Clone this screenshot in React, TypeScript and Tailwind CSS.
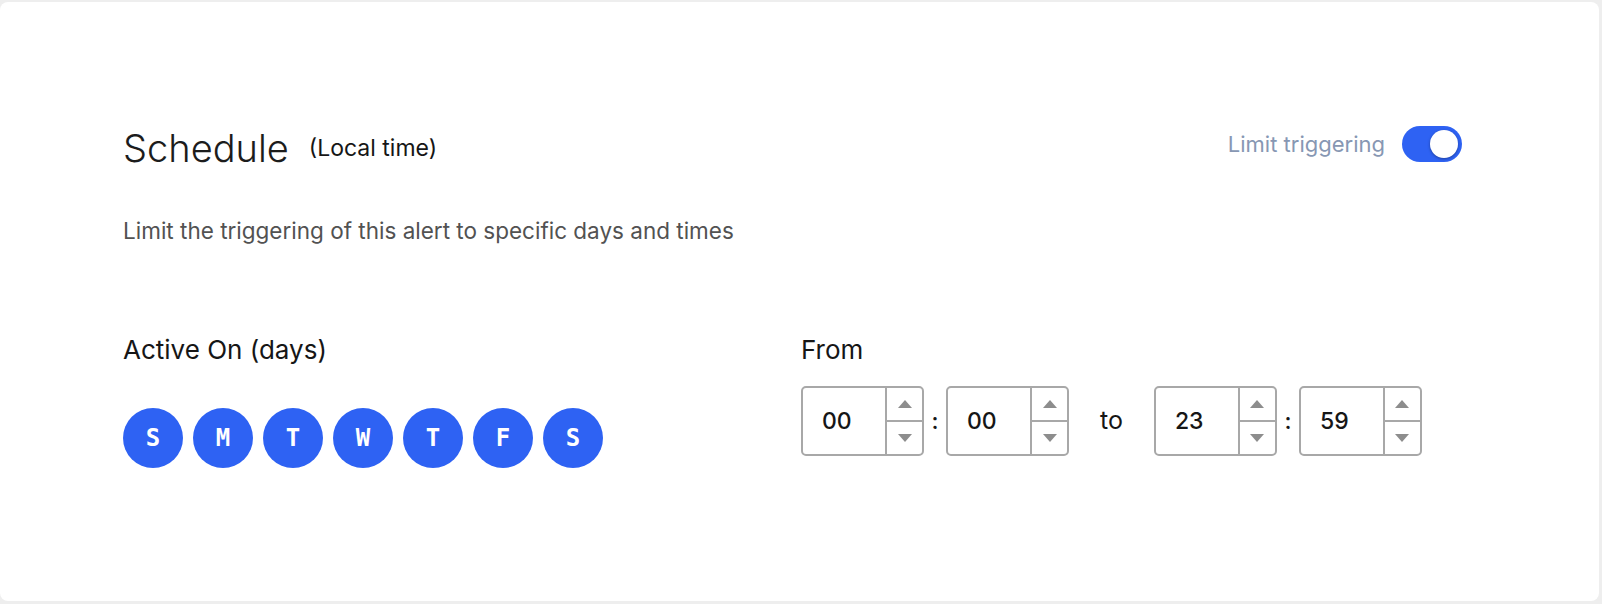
import { useState } from 'react'

const DAYS = ['S', 'M', 'T', 'W', 'T', 'F', 'S']

function Spinner() {
  return (
    <div className="flex w-[37px] flex-col border-l-2 border-[#a8a8a8]">
      <button className="flex flex-1 items-center justify-center">
        <span className="h-0 w-0 border-x-[7px] border-b-[8px] border-x-transparent border-b-[#8d8d8d]" />
      </button>
      <button className="flex flex-1 items-center justify-center border-t-2 border-[#a8a8a8]">
        <span className="h-0 w-0 border-x-[7px] border-t-[8px] border-x-transparent border-t-[#8d8d8d]" />
      </button>
    </div>
  )
}

function TimeBox({ value }: { value: string }) {
  return (
    <div className="flex h-[70px] w-[123px] rounded-[5px] border-2 border-[#a8a8a8] bg-white">
      <div className="flex flex-1 items-center pl-[19px] text-[23px] font-medium text-[#161616]">{value}</div>
      <Spinner />
    </div>
  )
}

function TimePair({ h, m }: { h: string; m: string }) {
  return (
    <div className="flex items-center">
      <TimeBox value={h} />
      <span className="w-[22px] text-center text-[23px] font-medium text-[#161616]">:</span>
      <TimeBox value={m} />
    </div>
  )
}

export default function App() {
  const [limit, setLimit] = useState(true)

  return (
    <div className="h-[604px] w-full bg-[#eeeeee] pb-[3px] pr-[3px] pt-[2px] font-['Inter',sans-serif]">
      <div className="h-full rounded-lg bg-white pl-[123px] pr-[137px] pt-[122px]">
        {/* header */}
        <div className="flex items-start justify-between">
          <div className="flex h-[48px] items-center gap-[20px]">
            <h1 className="text-[38px] font-light leading-[48px] text-[#1c1c1c]">Schedule</h1>
            <span className="text-[23px] text-[#161616]">(Local time)</span>
          </div>
          <div className="mt-[2px] flex items-center gap-[17px]">
            <span className="text-[22px] text-[#8797b3]">Limit triggering</span>
            <button
              onClick={() => setLimit(!limit)}
              className={`flex h-[36px] w-[60px] items-center rounded-full p-[4px] ${limit ? 'justify-end bg-[#2e62f3]' : 'justify-start bg-[#c6c6c6]'}`}
            >
              <span className="h-[28px] w-[28px] rounded-full bg-white shadow-[0_1px_3px_rgba(0,0,0,0.35)]" />
            </button>
          </div>
        </div>

        <p className="mt-[45px] text-[22.5px] leading-[28px] text-[#525252]">
          Limit the triggering of this alert to specific days and times
        </p>

        <div className="mt-[91px] grid grid-cols-[678px_1fr]">
          <div className="flex flex-col">
            <span className="text-[26px] leading-[28px] text-[#161616]">Active On (days)</span>
            <div className="mt-[44px] flex gap-[10px]">
              {DAYS.map((d, i) => (
                <span
                  key={i}
                  className="flex h-[60px] w-[60px] items-center justify-center rounded-full bg-[#2e62f3] font-['DejaVu_Sans_Mono',monospace] text-[24px] font-bold text-white"
                >
                  {d}
                </span>
              ))}
            </div>
          </div>

          <div className="flex flex-col">
            <span className="text-[26px] leading-[28px] text-[#161616]">From</span>
            <div className="mt-[22px] flex items-center">
              <TimePair h="00" m="00" />
              <span className="mx-[31px] text-[25px] text-[#161616]">to</span>
              <TimePair h="23" m="59" />
            </div>
          </div>
        </div>
      </div>
    </div>
  )
}
